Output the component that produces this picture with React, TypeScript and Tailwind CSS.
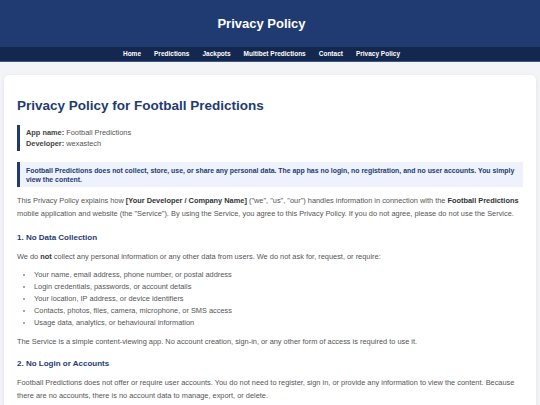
import React from "react";

export default function App() {
  const nav = ["Home", "Predictions", "Jackpots", "Multibet Predictions", "Contact", "Privacy Policy"];
  return (
    <div className="min-h-screen bg-[#f3f4f8] font-['Liberation_Sans',Arial,sans-serif]">
      <header className="bg-[#1f3b71] h-[47px] flex items-center justify-center pr-[17px]">
        <h1 className="text-white font-bold text-[13px] leading-none">Privacy Policy</h1>
      </header>
      <nav className="bg-[#14284f] h-[15px] border-b border-[#3b5788] flex items-center justify-center gap-[13px] pr-[17px]">
        {nav.map((n) => (
          <span key={n} className="text-white font-bold text-[6.5px] leading-none">{n}</span>
        ))}
      </nav>
      <main className="px-[4px] pt-[13px]">
        <div className="bg-white rounded-[5px] shadow-[0_1px_4px_rgba(0,0,0,0.08)] px-[13px] pt-[23px] pb-[20px] text-[7.4px] text-[#555]">
          <h2 className="text-[13.5px] leading-[16px] font-bold text-[#1f3b71]">Privacy Policy for Football Predictions</h2>
          <div className="mt-[11px] border-l-[3px] border-[#1f3b71] pl-[6px] py-[2px] leading-[11px] text-[7.4px]">
            <div><b className="text-[#444]">App name:</b> Football Predictions</div>
            <div><b className="text-[#444]">Developer:</b> wexastech</div>
          </div>
          <div className="mt-[11px] bg-[#edf2fc] border-l-[3px] border-[#1f3b71] pl-[6px] pr-[6px] py-[3.5px] leading-[9px] text-[6.9px] font-bold text-[#1f3b71]">
            Football Predictions does not collect, store, use, or share any personal data. The app has no login, no registration, and no user accounts. You simply view the content.
          </div>
          <p className="mt-[7px] leading-[13px]">
            This Privacy Policy explains how <b className="text-[#333]">[Your Developer / Company Name]</b> ("we", "us", "our") handles information in connection with the <b className="text-[#333]">Football Predictions</b> mobile application and website (the "Service"). By using the Service, you agree to this Privacy Policy. If you do not agree, please do not use the Service.
          </p>
          <h3 className="mt-[12.5px] text-[8px] leading-[10px] font-bold text-[#1f3b71]">1. No Data Collection</h3>
          <p className="mt-[7.5px] leading-[13px]">
            We do <b className="text-[#333]">not</b> collect any personal information or any other data from users. We do not ask for, request, or require:
          </p>
          <ul className="mt-[5.5px] list-disc pl-[17px] leading-[12px] marker:text-[#888]">
            <li>Your name, email address, phone number, or postal address</li>
            <li>Login credentials, passwords, or account details</li>
            <li>Your location, IP address, or device identifiers</li>
            <li>Contacts, photos, files, camera, microphone, or SMS access</li>
            <li>Usage data, analytics, or behavioural information</li>
          </ul>
          <p className="mt-[6.5px] leading-[13px]">
            The Service is a simple content-viewing app. No account creation, sign-in, or any other form of access is required to use it.
          </p>
          <h3 className="mt-[10.5px] text-[8px] leading-[10px] font-bold text-[#1f3b71]">2. No Login or Accounts</h3>
          <p className="mt-[7.5px] leading-[13px]">
            Football Predictions does not offer or require user accounts. You do not need to register, sign in, or provide any information to view the content. Because there are no accounts, there is no account data to manage, export, or delete.
          </p>
        </div>
      </main>
    </div>
  );
}
